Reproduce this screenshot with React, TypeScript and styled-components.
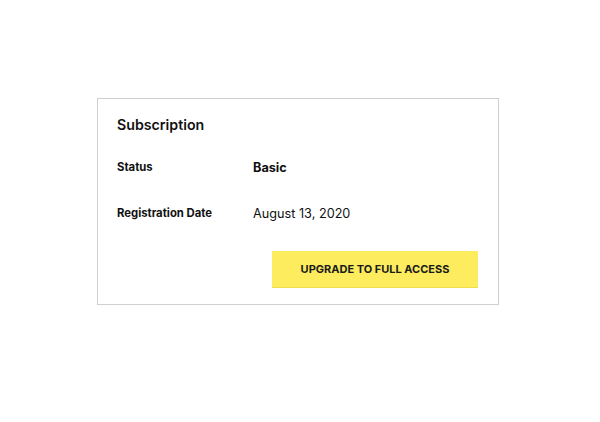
import React from "react";
import styled, { createGlobalStyle } from "styled-components";

const Global = createGlobalStyle`
  html, body { margin: 0; padding: 0; background: #fff; }
  body { font-family: "Inter", "Noto Sans", sans-serif; color: #111; }
`;

const Page = styled.div`
  padding: 98px 0 0 97px;
`;

const Card = styled.section`
  box-sizing: border-box;
  width: 402px;
  height: 207px;
  border: 1px solid #cfcfcf;
  padding: 16px 20px 16px 19px;
  display: flex;
  flex-direction: column;
`;

const Title = styled.h2`
  margin: 0;
  font-size: 14.2px;
  font-weight: 600;
  line-height: 20px;
  color: #111;
`;

const Rows = styled.div`
  display: flex;
  flex-direction: column;
  margin-top: 22px;
  gap: 26px;
`;

const Row = styled.div`
  display: grid;
  grid-template-columns: 136px 1fr;
  align-items: center;
  height: 20px;
`;

const Label = styled.span`
  font-size: 11.3px;
  font-weight: 700;
`;

const Value = styled.span<{ $bold?: boolean }>`
  font-size: 12.7px;
  font-weight: ${(p) => (p.$bold ? 700 : 400)};
`;

const Footer = styled.div`
  margin-top: auto;
  display: flex;
  justify-content: flex-end;
`;

const Button = styled.button`
  width: 206px;
  height: 37px;
  background: #fcec5e;
  border: none;
  border-bottom: 1px solid #efdc4a;
  font-family: inherit;
  font-size: 11px;
  font-weight: 700;
  color: #1a1a1a;
  cursor: pointer;
`;

export default function App() {
  return (
    <>
      <Global />
      <Page>
        <Card>
          <Title>Subscription</Title>
          <Rows>
            <Row>
              <Label>Status</Label>
              <Value $bold>Basic</Value>
            </Row>
            <Row>
              <Label>Registration Date</Label>
              <Value>August 13, 2020</Value>
            </Row>
          </Rows>
          <Footer>
            <Button>UPGRADE TO FULL ACCESS</Button>
          </Footer>
        </Card>
      </Page>
    </>
  );
}
